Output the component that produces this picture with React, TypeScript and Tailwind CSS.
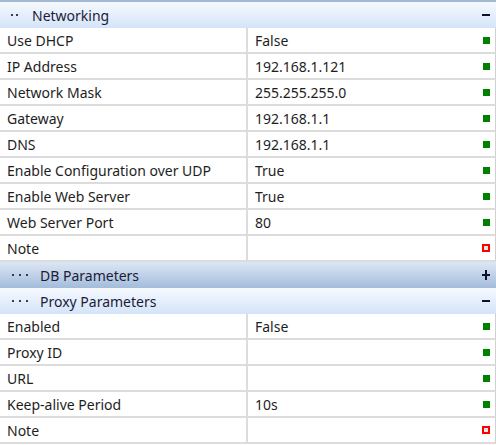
type Row = { label: string; value: string; note?: boolean };

const networking: Row[] = [
  { label: "Use DHCP", value: "False" },
  { label: "IP Address", value: "192.168.1.121" },
  { label: "Network Mask", value: "255.255.255.0" },
  { label: "Gateway", value: "192.168.1.1" },
  { label: "DNS", value: "192.168.1.1" },
  { label: "Enable Configuration over UDP", value: "True" },
  { label: "Enable Web Server", value: "True" },
  { label: "Web Server Port", value: "80" },
  { label: "Note", value: "", note: true },
];

const proxy: Row[] = [
  { label: "Enabled", value: "False" },
  { label: "Proxy ID", value: "" },
  { label: "URL", value: "" },
  { label: "Keep-alive Period", value: "10s" },
  { label: "Note", value: "", note: true },
];

function Dots({ count, wide }: { count: number; wide?: boolean }) {
  return (
    <div className={`flex items-center ${wide ? "gap-[5px] pl-[12px] w-[40px]" : "gap-[3px] pl-[11px] w-[32px]"}`}>
      {Array.from({ length: count }).map((_, i) => (
        <span key={i} className="w-[2px] h-[2px] bg-[#3a3a5a]" />
      ))}
    </div>
  );
}

function Header({
  title,
  collapsed,
  dots,
}: {
  title: string;
  collapsed?: boolean;
  dots: number;
}) {
  return (
    <div
      className={`flex items-center h-[26px] ${
        collapsed
          ? "bg-gradient-to-b from-[#dde7f4] to-[#a3bcdb]"
          : "bg-gradient-to-b from-[#f6f9fe] to-[#d4e4f9]"
      }`}
    >
      <Dots count={dots} wide={dots === 3} />
      <span className="flex-1 text-[#1b1b38] pt-[1px]">{title}</span>
      <div className="w-[10px] h-[10px] mr-[5px] relative">
        <span className="absolute left-[1px] top-[4px] w-[8px] h-[2px] bg-[#101030]" />
        {collapsed && (
          <span className="absolute left-[4px] top-0 w-[2px] h-[10px] bg-[#101030]" />
        )}
      </div>
    </div>
  );
}

function PropRow({ row }: { row: Row }) {
  return (
    <div className="flex h-[26px] border-b-2 border-[#dcdcdc] border-r border-r-[#d0d0d0]">
      <div className="w-[246px] pl-[7px] pt-[1px] flex items-center text-[#1e1e1e] whitespace-nowrap">
        {row.label}
      </div>
      <div className="w-[2px] bg-[#dcdcdc]" />
      <div className="flex-1 flex items-center pl-[7px] pr-[5px] text-[#1e1e1e]">
        <span className="flex-1 pt-[1px]">{row.value}</span>
        {row.note ? (
          <span className="w-[8px] h-[8px] bg-[#ff0000] flex items-center justify-center">
            <span className="w-[4px] h-[4px] bg-[#e6e6e6]" />
          </span>
        ) : (
          <span className="w-[7px] h-[7px] bg-[#008000]" />
        )}
      </div>
    </div>
  );
}

export default function App() {
  return (
    <div
      className="w-[496px] h-[445px] bg-white text-[14px] overflow-hidden"
      style={{ fontFamily: '"Noto Sans", sans-serif' }}
    >
      <div className="h-[2px] bg-[#a2b7d0]" />
      <Header title="Networking" dots={2} />
      {networking.map((r, i) => (
        <PropRow key={i} row={r} />
      ))}
      <Header title="DB Parameters" dots={3} collapsed />
      <Header title="Proxy Parameters" dots={3} />
      {proxy.map((r, i) => (
        <PropRow key={i} row={r} />
      ))}
    </div>
  );
}
